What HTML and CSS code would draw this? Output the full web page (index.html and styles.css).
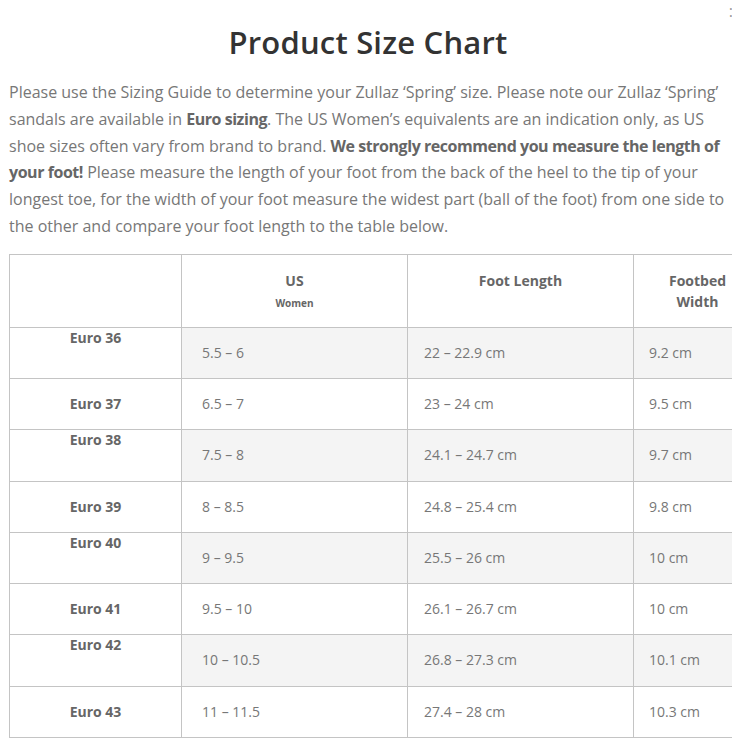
FILE: index.html
```html
<!DOCTYPE html>
<html lang="en">
<head>
<meta charset="utf-8">
<title>Product Size Chart</title>
<link rel="stylesheet" href="styles.css">
</head>
<body>
<span class="corner-mark">:</span>
<main class="page">
  <h1 class="title">Product Size Chart</h1>
  <p class="intro">Please use the Sizing Guide to determine your Zullaz ‘Spring’ size. Please note our Zullaz ‘Spring’<br>sandals are available in <strong>Euro sizing</strong>. The US Women’s equivalents are an indication only, as US<br>shoe sizes often vary from brand to brand. <strong>We strongly recommend you measure the length of<br>your foot!</strong> Please measure the length of your foot from the back of the heel to the tip of your<br>longest toe, for the width of your foot measure the widest part (ball of the foot) from one side to<br>the other and compare your foot length to the table below.</p>
  <table class="chart">
    <colgroup>
      <col class="c-euro">
      <col class="c-us">
      <col class="c-len">
      <col class="c-width">
    </colgroup>
    <thead>
      <tr>
        <th class="head"></th>
        <th class="head">US<br><span class="sub">Women</span></th>
        <th class="head">Foot Length</th>
        <th class="head">Footbed Width</th>
      </tr>
    </thead>
    <tbody>
      <tr class="shaded"><th class="euro top">Euro 36</th><td class="us">5.5 – 6</td><td class="len">22 – 22.9 cm</td><td class="wid">9.2 cm</td></tr>
      <tr><th class="euro">Euro 37</th><td class="us">6.5 – 7</td><td class="len">23 – 24 cm</td><td class="wid">9.5 cm</td></tr>
      <tr class="shaded"><th class="euro top">Euro 38</th><td class="us">7.5 – 8</td><td class="len">24.1 – 24.7 cm</td><td class="wid">9.7 cm</td></tr>
      <tr><th class="euro">Euro 39</th><td class="us">8 – 8.5</td><td class="len">24.8 – 25.4 cm</td><td class="wid">9.8 cm</td></tr>
      <tr class="shaded"><th class="euro top">Euro 40</th><td class="us">9 – 9.5</td><td class="len">25.5 – 26 cm</td><td class="wid">10 cm</td></tr>
      <tr><th class="euro">Euro 41</th><td class="us">9.5 – 10</td><td class="len">26.1 – 26.7 cm</td><td class="wid">10 cm</td></tr>
      <tr class="shaded"><th class="euro top">Euro 42</th><td class="us">10 – 10.5</td><td class="len">26.8 – 27.3 cm</td><td class="wid">10.1 cm</td></tr>
      <tr><th class="euro">Euro 43</th><td class="us">11 – 11.5</td><td class="len">27.4 – 28 cm</td><td class="wid">10.3 cm</td></tr>
    </tbody>
  </table>
</main>
</body>
</html>
```
FILE: styles.css
```css
html, body {
  margin: 0;
  padding: 0;
  overflow: hidden;
  background: #fff;
}
body {
  font-family: "Open Sans", "DejaVu Sans", sans-serif;
  color: #777;
  position: relative;
}
.corner-mark {
  position: absolute;
  right: -1px;
  top: 4px;
  font-size: 16px;
  line-height: 14px;
  color: #999;
}
.page {
  padding: 0 0 0 9px;
  width: 760px;
}
.title {
  margin: 0;
  padding-top: 22px;
  width: 718px;
  text-align: center;
  font-size: 31px;
  line-height: 40px;
  font-weight: 600;
  color: #333;
  letter-spacing: 0.2px;
}
.intro {
  margin: 17px 0 14px;
  font-size: 16px;
  line-height: 26.8px;
  color: #777;
  white-space: nowrap;
}
.intro strong {
  font-weight: 700;
  color: #666;
  letter-spacing: -0.45px;
}
.chart {
  border-collapse: collapse;
  table-layout: fixed;
  width: 752px;
}
.c-euro { width: 172px; }
.c-us { width: 226px; }
.c-len { width: 226px; }
.c-width { width: 128px; }
.chart th, .chart td {
  border: 1px solid #c4c4c4;
  font-size: 14px;
  line-height: 20.25px;
}
.head {
  vertical-align: top;
  padding: 15px 15px 13px;
  text-align: center;
  font-weight: 700;
  font-size: 13px;
  color: #666;
}
.chart .head {
  line-height: 21px;
}
.head .sub {
  font-size: 10px;
}
.euro {
  text-align: center;
  font-weight: 700;
  color: #666;
  background: #fff;
  padding: 15px 10px;
  vertical-align: middle;
}
.euro.top {
  vertical-align: top;
  padding-top: 0;
}
.chart td {
  padding: 15px 15px;
  vertical-align: middle;
  color: #777;
  font-weight: 400;
}
.chart td.us { padding-left: 20px; }
.chart td.len { padding-left: 16px; }
.chart td.wid { padding-left: 15px; }
.shaded td {
  background: #f4f4f4;
}
```
